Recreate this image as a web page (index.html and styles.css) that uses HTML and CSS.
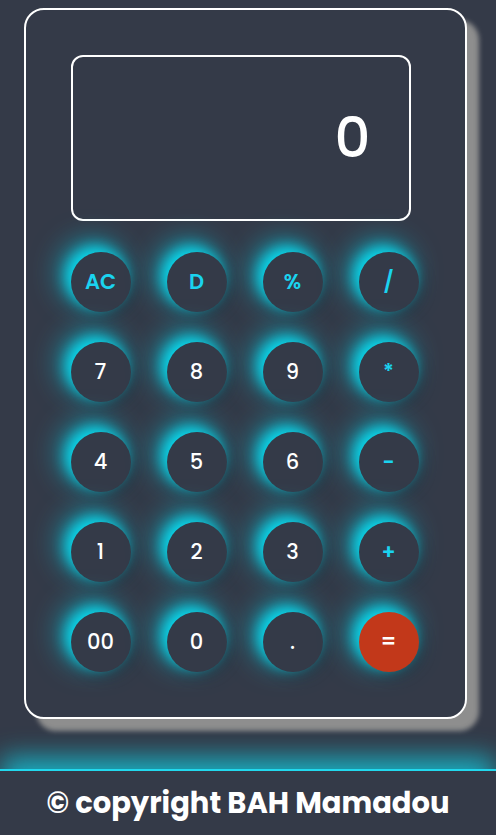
FILE: index.html
```html
<!DOCTYPE html>
<html lang="fr">
<head>
<meta charset="utf-8">
<title>Calculatrice</title>
<link rel="stylesheet" href="styles.css">
</head>
<body>
<main class="page">
  <div class="calc">
    <div class="display">0</div>
    <div class="keys">
      <button class="key op">AC</button>
      <button class="key op">D</button>
      <button class="key op">%</button>
      <button class="key op">/</button>
      <button class="key">7</button>
      <button class="key">8</button>
      <button class="key">9</button>
      <button class="key op">*</button>
      <button class="key">4</button>
      <button class="key">5</button>
      <button class="key">6</button>
      <button class="key op">-</button>
      <button class="key">1</button>
      <button class="key">2</button>
      <button class="key">3</button>
      <button class="key op">+</button>
      <button class="key">00</button>
      <button class="key">0</button>
      <button class="key">.</button>
      <button class="key equal">=</button>
    </div>
  </div>
</main>
<footer class="footer">© copyright BAH Mamadou</footer>
</body>
</html>
```
FILE: styles.css
```css
* { box-sizing: border-box; }
html, body { margin: 0; padding: 0; }
body {
  background: #343a48;
  font-family: Poppins, Inter, "Noto Sans", sans-serif;
  color: #fff;
  width: 496px;
  height: 835px;
  overflow: hidden;
}
.page {
  padding: 8px 0 0 24px;
  height: 769px;
}
.calc {
  width: 443px;
  height: 711px;
  border: 2.5px solid #fff;
  border-radius: 20px;
  padding: 44.5px 0 0 44.5px;
  box-shadow: 12px 12px 5px #8e8e8e;
  background: #343a48;
}
.display {
  width: 340px;
  height: 166px;
  border: 2.5px solid #fff;
  border-radius: 12px;
  display: flex;
  align-items: center;
  justify-content: flex-end;
  padding-right: 38px;
  font-size: 56px;
  font-weight: 500;
}
.keys {
  margin-top: 31px;
  display: grid;
  grid-template-columns: repeat(4, 60px);
  grid-auto-rows: 60px;
  column-gap: 36px;
  row-gap: 30px;
}
.key {
  width: 60px;
  height: 60px;
  border-radius: 50%;
  border: none;
  background: #343a48;
  color: #fff;
  font-family: inherit;
  font-size: 21px;
  font-weight: 500;
  box-shadow: -5px -5px 14px rgba(10, 225, 245, 0.9), -9px -9px 30px rgba(0, 215, 240, 0.7), 4px 4px 14px rgba(20, 24, 32, 0.3);
  display: flex;
  align-items: center;
  justify-content: center;
  padding: 0;
}
.key.op { color: #1ad3ef; font-weight: 600; }
.key.equal { background: #c2381a; color: #fff; font-weight: 600; }
.footer {
  height: 66px;
  border-top: 2px solid #22d8ee;
  box-shadow: 0 -14px 26px -2px rgba(20, 190, 210, 0.85);
  display: flex;
  align-items: center;
  justify-content: center;
  font-size: 29px;
  font-weight: 700;
}
```
